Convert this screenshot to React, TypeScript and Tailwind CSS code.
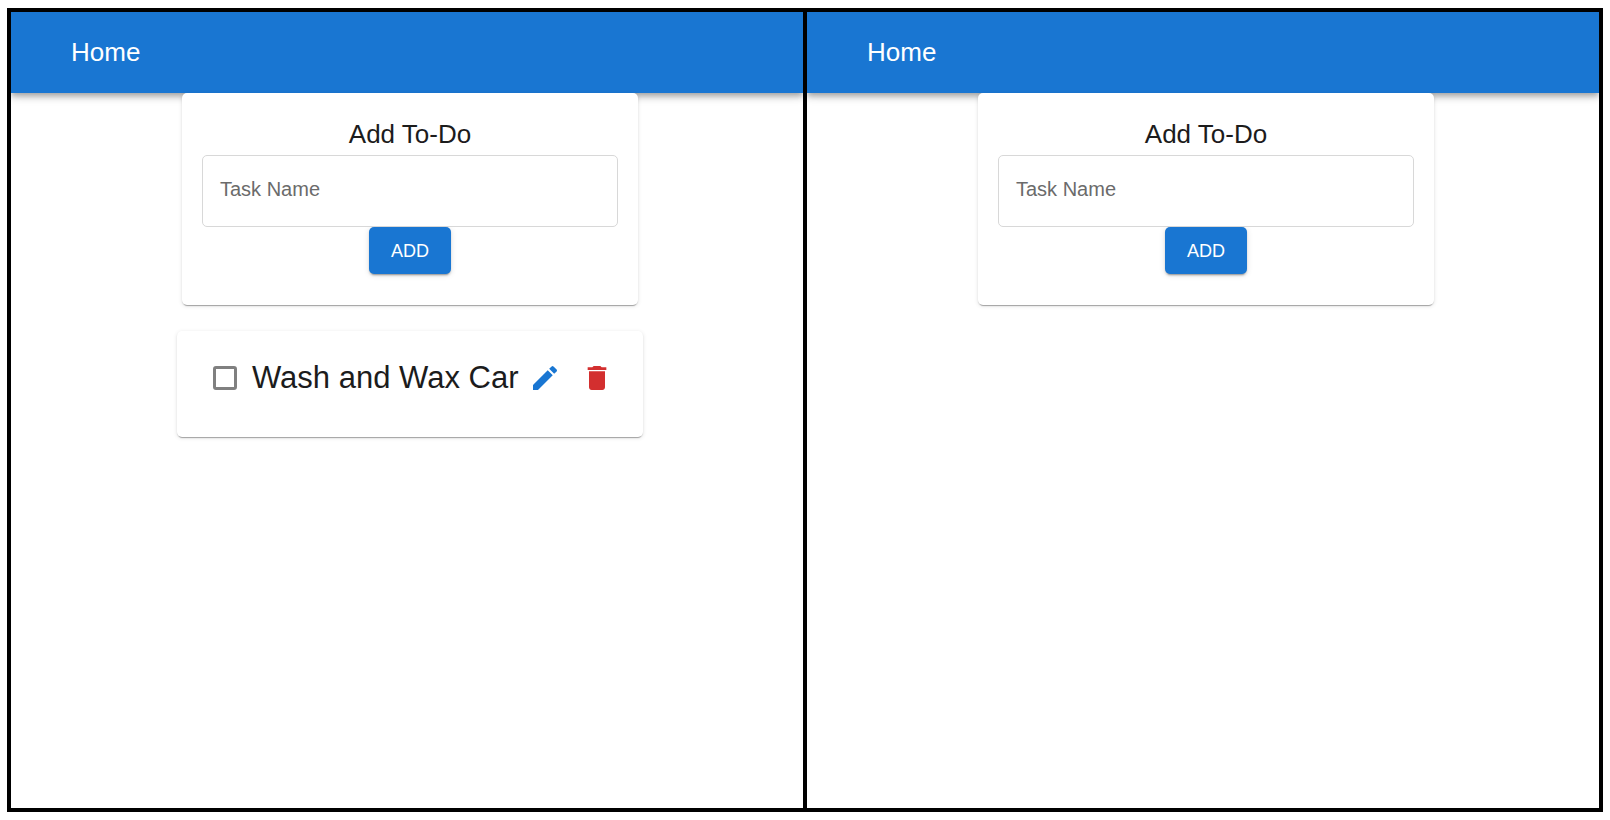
import { useState } from "react";

interface Task {
  id: number;
  name: string;
  done: boolean;
}

function TopBar() {
  return (
    <header className="flex h-[81px] items-center bg-[#1976d2] px-[60px] pb-0.5 shadow-[0_3px_5px_-1px_rgba(0,0,0,0.2),0_5px_6px_0_rgba(0,0,0,0.14),0_1px_13px_0_rgba(0,0,0,0.12)]">
      <a href="#" className="text-[26px] leading-10 text-white">
        Home
      </a>
    </header>
  );
}

const cardClass =
  "max-w-full rounded-[5px] bg-white shadow-[0_3px_1px_-2px_rgba(0,0,0,0.2),0_1px_1px_0_rgba(0,0,0,0.14),0_1px_4px_0_rgba(0,0,0,0.12)]";

function AddForm({ id, onAdd }: { id: string; onAdd: (name: string) => void }) {
  const [name, setName] = useState("");
  return (
    <form
      className={`${cardClass} flex w-[456px] flex-col items-center px-5 pt-5 pb-[31px]`}
      onSubmit={(e) => {
        e.preventDefault();
        if (name.trim()) onAdd(name.trim());
        setName("");
      }}
    >
      <h2 className="text-[26px] leading-[42px]">Add To-Do</h2>
      <div className="relative w-full">
        <input
          id={id}
          type="text"
          value={name}
          onChange={(e) => setName(e.target.value)}
          className="block h-[72px] w-full rounded-[5px] border border-[#d8d8d8] bg-white px-[17px] pb-1 text-xl"
        />
        {name === "" && (
          <label
            htmlFor={id}
            className="pointer-events-none absolute inset-0 flex items-center px-[18px] pb-1 text-xl text-[#6b6b6b]"
          >
            Task Name
          </label>
        )}
      </div>
      <button
        type="submit"
        className="h-[47px] rounded-[5px] bg-[#1976d2] px-[22px] text-lg text-white uppercase shadow-[0_3px_1px_-2px_rgba(0,0,0,0.2),0_2px_2px_0_rgba(0,0,0,0.14),0_1px_6px_0_rgba(0,0,0,0.12)]"
      >
        Add
      </button>
    </form>
  );
}

function TaskCard({ id, task, onToggle, onDelete }: { id: string; task: Task; onToggle: () => void; onDelete: () => void }) {
  return (
    <li className={`${cardClass} flex w-[466px] items-center pt-[19px] pr-[30px] pb-8 pl-9`}>
      <input
        id={id}
        type="checkbox"
        checked={task.done}
        onChange={onToggle}
        className="size-6 shrink-0 appearance-none rounded-[3px] border-[3px] border-[#808080] checked:bg-[#1976d2]"
      />
      <label htmlFor={id} className="ml-[15px] flex-1 text-[31px] leading-[55px]">
        {task.name}
      </label>
      <div className="flex gap-5">
        <button type="button" aria-label="Edit task" className="text-[#1976d2]">
          <svg viewBox="0 0 24 24" fill="currentColor" className="size-8">
            <path d="M3 17.25V21h3.75L17.81 9.94l-3.75-3.75L3 17.25zM20.71 7.04c.39-.39.39-1.02 0-1.41l-2.34-2.34a.9959.9959 0 0 0-1.41 0l-1.83 1.83 3.75 3.75 1.83-1.83z" />
          </svg>
        </button>
        <button type="button" aria-label="Delete task" onClick={onDelete} className="text-[#d32f2f]">
          <svg viewBox="0 0 24 24" fill="currentColor" className="size-8">
            <path d="M6 19c0 1.1.9 2 2 2h8c1.1 0 2-.9 2-2V7H6v12zM19 4h-3.5l-1-1h-5l-1 1H5v2h14V4z" />
          </svg>
        </button>
      </div>
    </li>
  );
}

function TodoPanel({ panelId, initial }: { panelId: string; initial: Task[] }) {
  const [tasks, setTasks] = useState(initial);
  return (
    <section className="min-w-0 flex-1 overflow-hidden">
      <TopBar />
      <main className="flex flex-col items-center gap-[26px] pl-1.5">
        <AddForm
          id={`${panelId}-name`}
          onAdd={(name) => setTasks([...tasks, { id: Date.now(), name, done: false }])}
        />
        <ul className="flex max-w-full flex-col gap-[26px]">
          {tasks.map((task) => (
            <TaskCard
              key={task.id}
              id={`${panelId}-task-${task.id}`}
              task={task}
              onToggle={() => setTasks(tasks.map((t) => (t.id === task.id ? { ...t, done: !t.done } : t)))}
              onDelete={() => setTasks(tasks.filter((t) => t.id !== task.id))}
            />
          ))}
        </ul>
      </main>
    </section>
  );
}

export default function App() {
  return (
    <div className="flex min-h-screen bg-white px-[7px] py-2 font-['Liberation_Sans',Arial,sans-serif] text-[#1c1c1c]">
      <div className="flex flex-1 divide-x-4 divide-black border-4 border-black">
        <TodoPanel panelId="first" initial={[{ id: 1, name: "Wash and Wax Car", done: false }]} />
        <TodoPanel panelId="second" initial={[]} />
      </div>
    </div>
  );
}
